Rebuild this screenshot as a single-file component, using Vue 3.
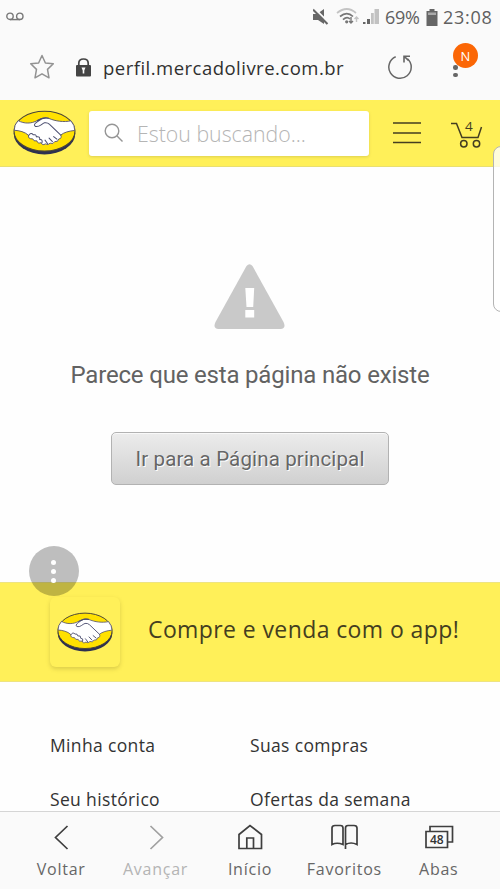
<script setup>
import { h } from 'vue'

const links = ['Minha conta', 'Suas compras', 'Seu histórico', 'Ofertas da semana']
const tabs = [
  { id: 'back', label: 'Voltar' },
  { id: 'next', label: 'Avançar' },
  { id: 'home', label: 'Início' },
  { id: 'fav', label: 'Favoritos' },
  { id: 'tabs', label: 'Abas' },
]

const path = (d, attrs = {}) => h('path', { d, ...attrs })
const BrandLogo = () =>
  h('svg', { viewBox: '0 0 62 44' }, [
    h('ellipse', { cx: 31, cy: 23, rx: 30.3, ry: 20.6, fill: '#2d3050' }),
    h('ellipse', { cx: 31, cy: 20.7, rx: 30, ry: 19.6, fill: '#ffe100', stroke: '#4b4638', 'stroke-width': 1.1 }),
    path('M5 10.3C11 13.5 18 13.5 24 10.2C28 8 31 6.9 35 8C42 11 50 12 57 10.5Q61 15 60.8 20C55 20.5 50 22 47 24.5Q48.5 28 45 28.4Q44.5 31.5 41 31Q39.5 34 36.5 32.5Q34.5 35 32 33.2Q28.5 35.2 27.8 32Q24 33.3 23.5 30.2Q20 31 19.5 28.3Q14.5 28.5 15.3 24.8C12 21.5 6 20 1.2 19.8Q1 14.5 5 10.3Z', { fill: '#fff', stroke: '#55536a', 'stroke-width': 0.9, 'stroke-linejoin': 'round' }),
    path('M35 8C29 6.5 26 10 22.5 12.5Q20 14.5 22 16C26 17 28 13.5 31 12.5Q34 12 36 14L47 24.5M40 26L43.2 28.6M35.5 27.5L38.8 31M31.5 29.5L34 32.8M15.4 25Q17.5 21.5 20 24.3Q22.8 23.5 23 26.3Q26.8 25.5 26.3 29Q29.5 28.6 28.5 32.2M24 10.2Q30 6.5 35 8', { fill: 'none', stroke: '#4a4d6f', 'stroke-width': 1, 'stroke-linecap': 'round', 'stroke-linejoin': 'round' }),
  ])
</script>

<template>
  <div class="screen">
    <div class="status">
      <svg class="voicemail" viewBox="0 0 18 9"><g fill="none" stroke="#777" stroke-width="1.4"><circle cx="4" cy="4.3" r="3.2" /><circle cx="13.8" cy="4.3" r="3.2" /><path d="M4 7.6H14" /></g></svg>
      <svg class="signals" viewBox="0 0 66 18">
        <path d="M0 6H4L11 1V16L5 12H0Z" fill="#666" />
        <path d="M1 0L16 15" stroke="#fafafa" stroke-width="2" /><path d="M0 1.5L14.5 16" stroke="#666" stroke-width="2" />
        <g fill="none" stroke-width="1.7"><path d="M24 5Q34 -3 43 5" stroke="#c4c4c4" /><path d="M27 8.5Q34 2.7 40 8.5" stroke="#777" /><path d="M30 11.6Q34 8 37 11" stroke="#777" /></g>
        <circle cx="33.7" cy="13.8" r="1.6" fill="#777" />
        <path d="M38 9V15M36 13L38 15L40 13" fill="none" stroke="#777" stroke-width="1.4" /><path d="M43.5 14V9M41.5 11L43.5 9L45.5 11" fill="none" stroke="#c4c4c4" stroke-width="1.4" />
        <path d="M50 14H52.5V16H50ZM54 11H57V16H54Z" fill="#666" /><path d="M58 5H60.8V16H58ZM61.5 1H66V16H61.5Z" fill="#c2c2c2" />
      </svg>
      <span class="percent">69%</span>
      <svg class="battery" viewBox="0 0 12 17"><path d="M3.5 0H8.5V2H11.5V17H.5V2H3.5Z" fill="#666" /><path d="M2 3.5H10V6H2Z" fill="#aaa" /></svg>
      <span class="clock">23:08</span>
    </div>

    <div class="address">
      <svg class="star" viewBox="0 0 26 26"><path d="M13 1.5L16.4 9L24.3 9.8L18.5 15.4L20 23.8L13 19.8L6 23.8L7.5 15.4L1.7 9.8L9.6 9Z" fill="none" stroke="#929292" stroke-width="1.5" stroke-linejoin="round" /></svg>
      <svg class="lock" viewBox="0 0 16 19"><path d="M3.3 8V5.2Q3.3 1 8 1Q12.7 1 12.7 5.2V8" fill="none" stroke="#444" stroke-width="1.7" /><rect x=".5" y="7" width="15" height="11.5" rx="1" fill="#444" /><path d="M6 9.5H10L8.8 12.4V15.5H7.2V12.4Z" fill="#fafafa" /></svg>
      <span class="url">perfil.mercadolivre.com.br</span>
      <svg class="reload" viewBox="0 0 26 26"><path d="M8.7 2.8A11.2 11.2 0 1 0 20.5 4.8" fill="none" stroke="#666" stroke-width="1.5" /><path d="M23 2.2H17V8.5M17.5 2.7L21.5 6.5" fill="none" stroke="#666" stroke-width="1.6" /></svg>
      <div class="more"><i></i><i></i><span class="badge">N</span></div>
    </div>

    <header class="site-header">
      <BrandLogo class="logo" />
      <div class="search">
        <svg viewBox="0 0 20 20"><circle cx="8" cy="8" r="6.8" /><path d="M12.8 12.8L18.5 18.5" /></svg>
        <span>Estou buscando...</span>
      </div>
      <svg class="menu" viewBox="0 0 28 22"><path d="M0 1H28M0 11H28M0 20.5H28" /></svg>
      <svg class="cart" viewBox="0 0 34 38"><g fill="none" stroke="#443e20" stroke-width="1.5"><path d="M1 9.5H6.5L12 23.5H28L31.5 13" /><circle cx="13.8" cy="29.8" r="3.2" /><circle cx="26.5" cy="29.8" r="3.2" /></g><text x="15" y="17">4</text></svg>
    </header>
    <div class="edge-handle"></div>

    <main class="notice">
      <svg class="warning" viewBox="0 0 70 65"><path d="M32 2Q35-1.5 38 2L69 58Q72 64.5 66 65H4Q-2 64.5 1 58Z" fill="#c9c9c9" /><path d="M30.8 24H39.7L38.7 43H32ZM30.8 46H39.7V53.5H30.8Z" fill="#fff" /></svg>
      <p><span>Parece que esta página não existe</span></p>
      <button><span>Ir para a Página principal</span></button>
    </main>

    <section class="promo">
      <div class="fab"><i></i><i></i><i></i></div>
      <div class="app-icon"><BrandLogo class="app-logo" /></div>
      <span>Compre e venda com o app!</span>
    </section>

    <div class="links"><div v-for="item in links" :key="item"><span>{{ item }}</span></div></div>

    <nav>
      <div v-for="tab in tabs" :key="tab.id" class="tab" :class="tab.id">
        <svg viewBox="0 0 30 28">
          <path v-if="tab.id === 'back'" d="M21.5 3L9.5 14.5L21.5 26" />
          <path v-if="tab.id === 'next'" d="M9.5 3L21.5 14.5L9.5 26" />
          <path v-if="tab.id === 'home'" d="M4 11.5L15 2.5L26.5 11.5V25.5H4ZM11.8 25V15H18.5V25" />
          <path v-if="tab.id === 'fav'" d="M16.5 26V5Q16.5 2.5 19 2.5H25Q28 2.5 28 5V21.5Q22 18.5 16.5 21.5M14 21.5Q8 19 3 21.5V5Q3 2.5 6 2.5H11.5Q14 2.5 14 5Z" />
          <g v-if="tab.id === 'tabs'"><path d="M6 8V3.5H28.5V19H24M2 8.5H23.5V24.5H2Z" /><text x="12.8" y="21.2">48</text></g>
        </svg>
        <span>{{ tab.label }}</span>
      </div>
    </nav>
  </div>
</template>

<style>
body { margin: 0; background: #fefefe; }
</style>

<style scoped>
.screen { position: relative; box-sizing: border-box; width: 500px; height: 889px; overflow: hidden; background: #fefefe; display: flex; flex-direction: column; font-family: "Open Sans", sans-serif; color: #333; }
.screen > * { flex-shrink: 0; }
span { white-space: nowrap; }
svg { display: block; flex-shrink: 0; }
.status { height: 34px; display: flex; align-items: center; background: #fafafa; color: #606060; font-size: 18px; box-sizing: border-box; padding-left: 6px; }
.voicemail { width: 18px; height: 9px; margin-top: -2px; }
.signals { width: 66px; height: 18px; margin-left: 289px; }
.percent { width: 41px; margin-left: 6px; letter-spacing: -.3px; }
.battery { width: 12px; height: 17px; }
.clock { margin-left: 5px; letter-spacing: .7px; }
.address { height: 66px; display: flex; align-items: center; background: #fafafa; padding-left: 29px; }
.star { width: 26px; height: 26px; }
.lock { width: 17px; height: 19px; margin-left: 20px; }
.url { width: 286px; margin-left: 11px; font-size: 18.5px; letter-spacing: .48px; color: #303030; }
.reload { width: 26px; height: 26px; margin-left: -2px; }
.more { position: relative; width: 5px; height: 20px; margin-left: 40px; display: flex; flex-direction: column; justify-content: flex-end; gap: 3px; }
.more i { width: 4.5px; height: 4.5px; border-radius: 50%; background: #666; }
.badge { position: absolute; left: 0; top: -14px; width: 25px; height: 25px; border-radius: 50%; background: #fb6605; color: #fff; font-size: 13px; line-height: 26px; text-align: center; }
.site-header { height: 67px; box-sizing: border-box; border-bottom: 1px solid #e9df71; background: #fff059; display: flex; align-items: center; padding-left: 13px; }
.logo { width: 63px; height: 45px; margin-top: -2px; }
.search { width: 280px; height: 45px; margin-left: 13px; border-radius: 3px; background: #fff; box-shadow: 0 1px 3px #9b8f4055; display: flex; align-items: center; box-sizing: border-box; padding-left: 15px; }
.search svg { width: 20px; height: 20px; fill: none; stroke: #969696; stroke-width: 1.4; }
.search span { margin-left: 13px; font: 300 21.3px "Open Sans", sans-serif; color: #b5b5b5; }
.menu { width: 28px; height: 22px; margin-left: 24px; fill: none; stroke: #443e20; stroke-width: 1.5; }
.cart { width: 34px; height: 38px; margin-left: 29px; }
.cart text { font: 13.5px "Open Sans", sans-serif; fill: #443e20; }
.edge-handle { position: absolute; left: 493px; top: 146px; width: 14px; height: 164px; border: 1px solid #b4b4b4; border-radius: 8px; background: #ffffffc9; }
.notice { height: 415px; box-sizing: border-box; padding-top: 97px; display: flex; flex-direction: column; align-items: center; font-family: Roboto, sans-serif; color: #626262; }
.warning { width: 71px; height: 65px; margin-left: -1px; }
.notice p { margin: 31px 0 0; font-size: 24px; line-height: 30px; letter-spacing: -.18px; }
.notice button { width: 278px; height: 53px; margin-top: 42px; border: 1px solid #b2b2b2; border-radius: 5px; background: linear-gradient(#ececec, #d0d0d0); box-shadow: inset 0 1px #f9f9f9; color: #666; font: 20.5px Roboto, sans-serif; letter-spacing: .14px; text-shadow: 1px 1px #fff; padding: 0; }
.promo { position: relative; height: 100px; box-sizing: border-box; background: #fff059; border-top: 1px solid #eee481; border-bottom: 1px solid #eee481; display: flex; align-items: center; padding-left: 50px; }
.fab { position: absolute; left: 28.5px; top: -37px; width: 50px; height: 50px; border-radius: 50%; background: #00000040; display: flex; flex-direction: column; align-items: center; justify-content: center; gap: 4px; }
.fab i { width: 5px; height: 5px; border-radius: 50%; background: #fff; }
.app-icon { width: 70px; height: 70px; border-radius: 6px; background: #fff059; box-shadow: 0 2px 4px #94872c55; display: flex; align-items: center; justify-content: center; }
.app-logo { width: 56px; height: 40px; }
.promo > span { margin-left: 28px; margin-top: -7px; font-size: 23px; letter-spacing: .4px; color: #443e20; }
.links { height: 129px; box-sizing: border-box; overflow: hidden; padding: 36px 50px 0; display: grid; grid-template-columns: 200px 200px; grid-auto-rows: 54px; font-size: 17.5px; letter-spacing: .35px; line-height: 54px; }
nav { box-sizing: border-box; height: 78px; border-top: 1px solid #d5d5d5; padding: 11px 14px 0; background: #fafafa; display: flex; }
.tab { width: 94.4px; display: flex; flex-direction: column; align-items: center; color: #666; }
.tab svg { width: 30px; height: 28px; fill: none; stroke: #3e3e3e; stroke-width: 1.7; }
.tab text { font: 600 12px "Open Sans", sans-serif; fill: #333; stroke: none; text-anchor: middle; }
.tab span { margin-top: 7px; font-size: 16px; line-height: 23px; letter-spacing: .75px; }
.next { color: #b4b4b4; }
.next svg { stroke: #a0a0a0; }
</style>
